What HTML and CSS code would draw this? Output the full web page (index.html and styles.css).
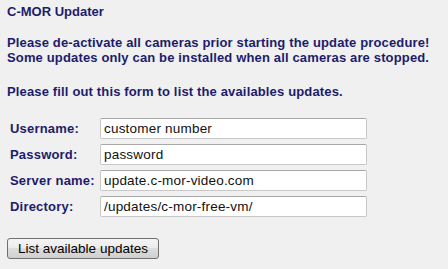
FILE: index.html
```html
<!DOCTYPE html>
<html>
<head>
<meta charset="utf-8">
<link rel="stylesheet" href="styles.css">
</head>
<body>
<div class="page">
  <h1 class="title">C-MOR Updater</h1>
  <p class="msg msg-warn">Please de-activate all cameras prior starting the update procedure!<br>Some updates only can be installed when all cameras are stopped.</p>
  <p class="msg">Please fill out this form to list the availables updates.</p>
  <form class="form">
    <div class="row"><label class="lbl">Username:</label><input class="field" type="text" value="customer number"></div>
    <div class="row"><label class="lbl">Password:</label><input class="field" type="text" value="password"></div>
    <div class="row"><label class="lbl">Server name:</label><input class="field" type="text" value="update.c-mor-video.com"></div>
    <div class="row"><label class="lbl">Directory:</label><input class="field" type="text" value="/updates/c-mor-free-vm/"></div>
    <div class="actions"><button class="btn" type="button">List available updates</button></div>
  </form>
</div>
</body>
</html>
```
FILE: styles.css
```css
html, body {
  margin: 0;
  padding: 0;
  background: #f0f0f0;
}
.page {
  padding: 4px 7px;
  font-family: "Liberation Sans", Arial, sans-serif;
  font-size: 13px;
  color: #1c1c6c;
}
.title {
  font-size: 13px;
  font-weight: bold;
  margin: 0 0 16px 0;
  line-height: 15px;
}
.msg {
  font-weight: bold;
  margin: 0 0 19px 0;
  line-height: 15px;
  letter-spacing: 0.15px;
}
.form {
  margin: 0;
  padding-left: 3px;
}
.row {
  display: flex;
  align-items: center;
  height: 21px;
  margin-bottom: 5px;
}
.lbl {
  width: 90px;
  font-size: 13px;
  font-weight: bold;
  letter-spacing: 0.2px;
}
.field {
  box-sizing: border-box;
  width: 267px;
  height: 21px;
  margin: 0;
  padding: 0 3px;
  border: 1px solid #c8c8c8;
  border-top-color: #a8a8a8;
  border-radius: 2px;
  background: #fff;
  font-family: "Liberation Sans", Arial, sans-serif;
  font-size: 13.5px;
  letter-spacing: 0.2px;
  color: #111;
}
.actions {
  margin-top: 21px;
  margin-left: -3px;
}
.btn {
  box-sizing: border-box;
  width: 152px;
  height: 21px;
  padding: 0;
  border: 1px solid #707070;
  border-radius: 3px;
  background: linear-gradient(#f4f4f4, #ebebeb 50%, #dddddd 50%, #cfcfcf);
  font-family: "Liberation Sans", Arial, sans-serif;
  font-size: 13.5px;
  color: #000;
}
```
